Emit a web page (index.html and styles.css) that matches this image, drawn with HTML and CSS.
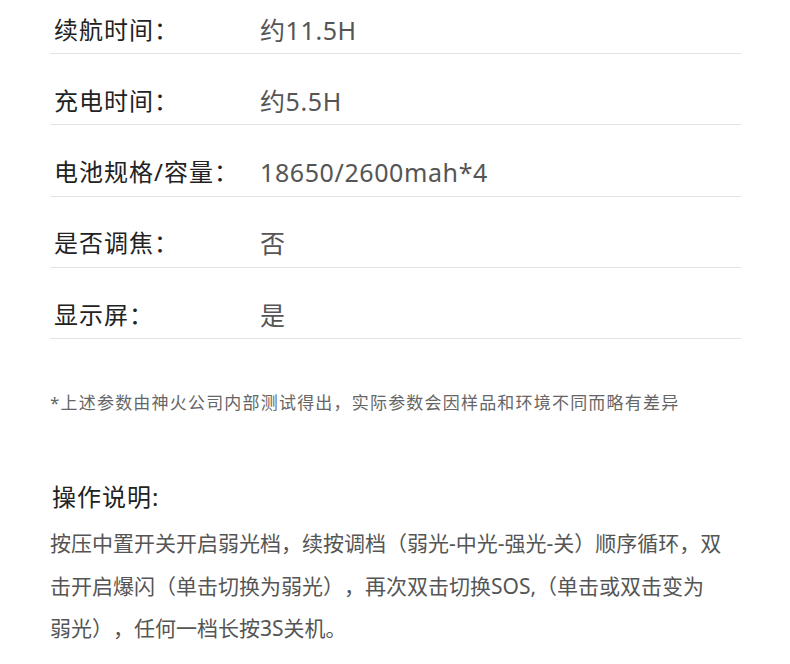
FILE: index.html
```html
<!DOCTYPE html>
<html lang="zh-CN">
<head>
    <meta charset="UTF-8">
    <title>产品参数</title>
    <link rel="stylesheet" href="styles.css">
</head>
<body>
<div class="page">
    <div class="spec-list">
        <div class="spec-row"><span class="spec-label">续航时间：</span><span class="spec-value">约11.5H</span></div>
        <div class="spec-row"><span class="spec-label">充电时间：</span><span class="spec-value">约5.5H</span></div>
        <div class="spec-row"><span class="spec-label">电池规格/容量：</span><span class="spec-value">18650/2600mah*4</span></div>
        <div class="spec-row"><span class="spec-label">是否调焦：</span><span class="spec-value">否</span></div>
        <div class="spec-row"><span class="spec-label">显示屏：</span><span class="spec-value">是</span></div>
    </div>

    <p class="note">*上述参数由神火公司内部测试得出，实际参数会因样品和环境不同而略有差异</p>

    <h2 class="section-title">操作说明:</h2>
    <p class="section-text">按压中置开关开启弱光档，续按调档（弱光-中光-强光-关）顺序循环，双<br>击开启爆闪（单击切换为弱光），再次双击切换SOS,（单击或双击变为<br>弱光），任何一档长按3S关机。</p>
</div>
</body>
</html>
```

FILE: styles.css
```css
body {
    margin: 0;
    background: #fff;
    font-family: "Noto Sans", "Noto Sans CJK SC", sans-serif;
    text-spacing-trim: space-all;
}
.page {
    width: 691px;
    padding-left: 50px;
}
.spec-row {
    display: grid;
    grid-template-columns: 206px 1fr;
    align-items: center;
    height: 24px;
    padding: 34.75px 0 11.5px 4px;
    line-height: 24px;
    border-bottom: 1px solid #e3e3e3;
}
.spec-row:first-child {
    padding-top: 17.5px;
}
.spec-label {
    font-size: 24px;
    letter-spacing: 1px;
    color: #222;
}
.spec-value {
    font-size: 25px;
    letter-spacing: 0.6px;
    color: #555;
}
.note {
    margin: 52px 0 0;
    font-size: 17px;
    letter-spacing: 1.2px;
    line-height: 24px;
    color: #666;
}
.section-title {
    margin: 67px 0 0 2px;
    font-size: 24px;
    letter-spacing: 1px;
    line-height: 30px;
    font-weight: normal;
    color: #222;
}
.section-text {
    margin: 10px 0 0;
    font-size: 21px;
    line-height: 42.5px;
    color: #555;
}
```
